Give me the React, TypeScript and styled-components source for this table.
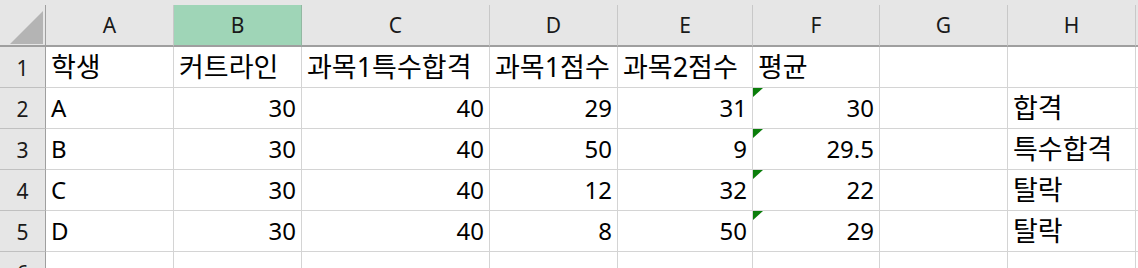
import React, { FC } from 'react'
import styled, { createGlobalStyle } from 'styled-components'

const GlobalStyle = createGlobalStyle`
html, body {
margin: 0;
padding: 0;
background: #ffffff;
overflow: hidden;
}
`

const columns = ['A', 'B', 'C', 'D', 'E', 'F', 'G', 'H', '']
const widths = [46, 128, 128, 188, 128, 135, 127, 128, 128, 128]

type CellValue = { text: string; num?: boolean; flag?: boolean }

const rows: CellValue[][] = [
  [{ text: '학생' }, { text: '커트라인' }, { text: '과목1특수합격' }, { text: '과목1점수' }, { text: '과목2점수' }, { text: '평균' }, { text: '' }, { text: '' }],
  [{ text: 'A' }, { text: '30', num: true }, { text: '40', num: true }, { text: '29', num: true }, { text: '31', num: true }, { text: '30', num: true, flag: true }, { text: '' }, { text: '합격' }],
  [{ text: 'B' }, { text: '30', num: true }, { text: '40', num: true }, { text: '50', num: true }, { text: '9', num: true }, { text: '29.5', num: true, flag: true }, { text: '' }, { text: '특수합격' }],
  [{ text: 'C' }, { text: '30', num: true }, { text: '40', num: true }, { text: '12', num: true }, { text: '32', num: true }, { text: '22', num: true, flag: true }, { text: '' }, { text: '탈락' }],
  [{ text: 'D' }, { text: '30', num: true }, { text: '40', num: true }, { text: '8', num: true }, { text: '50', num: true }, { text: '29', num: true, flag: true }, { text: '' }, { text: '탈락' }],
  [],
]

const hasHangul = (s: string) => /[\uac00-\ud7a3]/.test(s)

const App: FC = () => {
  return (
    <>
      <GlobalStyle />
      <Sheet>
        <Grid>
          <Corner>
            <CornerMark />
          </Corner>
          {columns.map((c, i) => (
            <ColHeader key={i} $selected={c === 'B'}>{c}</ColHeader>
          ))}
          {rows.map((row, r) => (
            <React.Fragment key={r}>
              <RowHeader>{r + 1}</RowHeader>
              {columns.map((c, i) => {
                const cell = row[i] || { text: '' }
                return (
                  <Cell key={i} $num={cell.num}>
                    {cell.flag && <ErrorFlag />}
                    <CellText $hangul={hasHangul(cell.text)}>{cell.text}</CellText>
                  </Cell>
                )
              })}
            </React.Fragment>
          ))}
        </Grid>
      </Sheet>
    </>
  )
}

const Sheet = styled.div`
width: 1138px;
height: 268px;
overflow: hidden;
background-color: #e6e6e6;
padding-top: 5px;
box-sizing: border-box;
font-family: "Noto Sans", "Noto Sans CJK KR", sans-serif;
`
const Grid = styled.div`
display: grid;
grid-template-columns: ${widths.map((w) => `${w}px`).join(' ')};
grid-template-rows: 42px repeat(6, 41px);
background-color: #ffffff;
`
const Corner = styled.div`
box-sizing: border-box;
background-color: #e6e6e6;
border-right: 1px solid #9f9f9f;
border-bottom: 2px solid #9f9f9f;
display: flex;
align-items: flex-end;
justify-content: flex-end;
padding: 0 2px 1px 0;
`
const CornerMark = styled.div`
width: 33px;
height: 33px;
background-color: #b4b4b4;
clip-path: polygon(100% 0, 100% 100%, 0 100%);
`
const ColHeader = styled.div<{ $selected?: boolean }>`
box-sizing: border-box;
background-color: ${(p) => (p.$selected ? '#9fd5b7' : '#e6e6e6')};
border-right: 1px solid ${(p) => (p.$selected ? '#92b8a2' : '#c8c8c8')};
border-bottom: 2px solid #9f9f9f;
display: flex;
align-items: center;
justify-content: center;
font-size: 21px;
color: #1a1a1a;
`
const RowHeader = styled.div`
box-sizing: border-box;
background-color: #e6e6e6;
border-right: 1px solid #9f9f9f;
border-bottom: 1px solid #c0c0c0;
display: flex;
align-items: center;
justify-content: center;
padding-top: 2px;
font-size: 21px;
color: #1a1a1a;
`
const Cell = styled.div<{ $num?: boolean }>`
position: relative;
box-sizing: border-box;
border-right: 1px solid #d4d4d4;
border-bottom: 1px solid #d4d4d4;
display: flex;
align-items: center;
justify-content: ${(p) => (p.$num ? 'flex-end' : 'flex-start')};
padding: 1px 5px 0 5px;
color: #000000;
white-space: nowrap;
overflow: hidden;
`
const CellText = styled.span<{ $hangul?: boolean }>`
font-size: ${(p) => (p.$hangul ? '27px' : '24px')};
line-height: 1.2;
`
const ErrorFlag = styled.div`
position: absolute;
left: 0;
top: 0;
width: 10px;
height: 9px;
background-color: #0a7d0a;
clip-path: polygon(0 0, 100% 0, 0 100%);
`

export default App
